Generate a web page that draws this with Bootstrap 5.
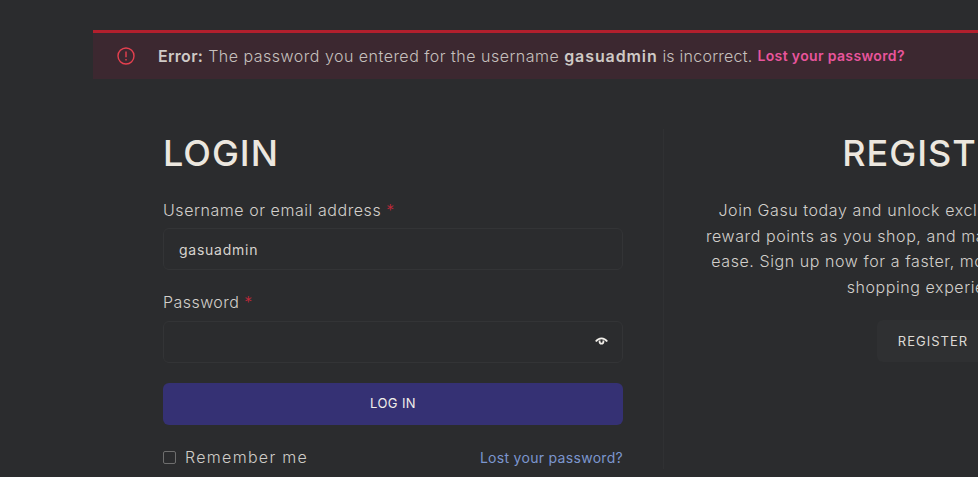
<!DOCTYPE html>
<html lang="en">
<head>
<meta charset="utf-8">
<title>Login</title>
<link href="https://cdn.jsdelivr.net/npm/bootstrap@5.3.0/dist/css/bootstrap.min.css" rel="stylesheet">
<style>
html,body{height:477px;overflow:hidden;background:#2b2c2e}
body{font-family:Inter,"Liberation Sans",sans-serif;font-size:16px;font-weight:300;color:#c9c6c1}
.page-shell{width:1140px;margin-left:93px;padding-top:30px}
.err-box{height:49px;background:#3c2830;border:0;border-top:3px solid #b41f2d;border-radius:0;margin:0;padding:0 0 1px 24px;color:#c6c0be;font-size:16px;letter-spacing:.49px}
.err-box svg{width:18px;height:18px;margin-right:23px;flex:none}
.err-box b{font-weight:600;color:#cfcac6;letter-spacing:.3px}
.err-box b.err-user{letter-spacing:.9px}
.err-tail{letter-spacing:.24px}
.err-link{color:#e8559c;font-size:14px;font-weight:600;text-decoration:none;margin-left:5px;letter-spacing:.35px}
.col-pane{width:570px;flex:none;padding:0 40px 0 70px;margin-top:50px}
.col-pane+.col-pane{border-left:1px solid #303133;padding:0 70px 0 39px;text-align:center}
.pane-title{font-size:36px;line-height:48px;font-weight:500;color:#ece7df;margin:0 0 21px;letter-spacing:1px}
.field-label{display:block;line-height:24px;margin-bottom:6px;color:#d2cfcb;letter-spacing:.45px}
.field-label.wide{letter-spacing:.56px}
.field-label.snug{margin-top:-1px;margin-bottom:7px}
.req{color:#c4283a}
.field-input{height:42px;background:#2b2c2e;border:1px solid #333436;border-radius:6px;color:#d6d3ce;font-size:14px;padding:0 15px;letter-spacing:.75px}
.field-input:focus{background:#2b2c2e;color:#d6d3ce}
.field-gap{margin-bottom:21px}
.field-gap.last{margin-bottom:20px}
.eye-mark{position:absolute;right:15px;top:13px;width:13px;height:13px}
.btn-login{height:42px;background:#353174;border:0;border-radius:6px;color:#f1eee9;font-size:13px;font-weight:400;letter-spacing:.4px}
.btn-login:hover{background:#353174;color:#f1eee9}
input.form-check-input.check-box[type=checkbox]{width:13px;height:13px;margin:0 9px 0 0;background:transparent;border:1px solid #6e6e6e;border-radius:2px}
.check-label{letter-spacing:1.3px;color:#cfccc8}
.lost-link{font-size:14px;font-weight:400;color:#7c96cf;text-decoration:none;letter-spacing:.3px}
.reg-copy{color:#d2cfcb;line-height:25.6px;margin:0 0 20px;letter-spacing:.58px;white-space:nowrap}
.btn-reg{height:42px;padding:0 21px;background:#2f3032;border:0;border-radius:6px;color:#dedad5;font-size:13px;font-weight:400;letter-spacing:1px;line-height:42px}
.btn-reg:hover{background:#2f3032;color:#dedad5}
</style>
</head>
<body>
<div class="page-shell">
  <div class="alert err-box d-flex align-items-center" role="alert">
    <svg viewBox="0 0 18 18" fill="none" stroke="#e5404f" stroke-width="1.4"><circle cx="9" cy="9" r="8"/><path d="M9 4.6v5.6M9 12v1.4"/></svg>
    <span><b>Error:</b> The password you entered for the username <b class="err-user">gasuadmin</b><span class="err-tail"> is incorrect.</span></span>
    <a class="err-link" href="#">Lost your password?</a>
  </div>
  <div class="d-flex">
    <div class="col-pane">
      <h2 class="pane-title">LOGIN</h2>
      <form>
        <div class="field-gap">
          <label class="field-label wide" for="u">Username or email address <span class="req">*</span></label>
          <input id="u" class="form-control field-input" type="text" value="gasuadmin">
        </div>
        <div class="field-gap last">
          <label class="field-label snug" for="p">Password <span class="req">*</span></label>
          <div class="position-relative">
            <input id="p" class="form-control field-input" type="password">
            <svg class="eye-mark" viewBox="0 0 13 13" fill="none" stroke="#f1eee9" stroke-width="1.8"><path d="M.8 7.6C3.8 3.2 9.2 3.2 12.2 7.6"/><path d="M4.6 6.4v1.4a1.9 1.9 0 0 0 3.8 0V6.4" /></svg>
          </div>
        </div>
        <button type="button" class="btn btn-login w-100 d-block">LOG IN</button>
        <div class="d-flex justify-content-between align-items-center mt-3 pt-1">
          <label class="d-flex align-items-center check-label"><input class="form-check-input check-box" type="checkbox">Remember me</label>
          <a class="lost-link" href="#">Lost your password?</a>
        </div>
      </form>
    </div>
    <div class="col-pane">
      <h2 class="pane-title">REGISTER</h2>
      <p class="reg-copy">Join Gasu today and unlock exclusive discounts, earn<br>reward points as you shop, and manage your orders with<br>ease. Sign up now for a faster, more comfortable online<br>shopping experience.</p>
      <a class="btn btn-reg" href="#">REGISTER</a>
    </div>
  </div>
</div>
</body>
</html>
